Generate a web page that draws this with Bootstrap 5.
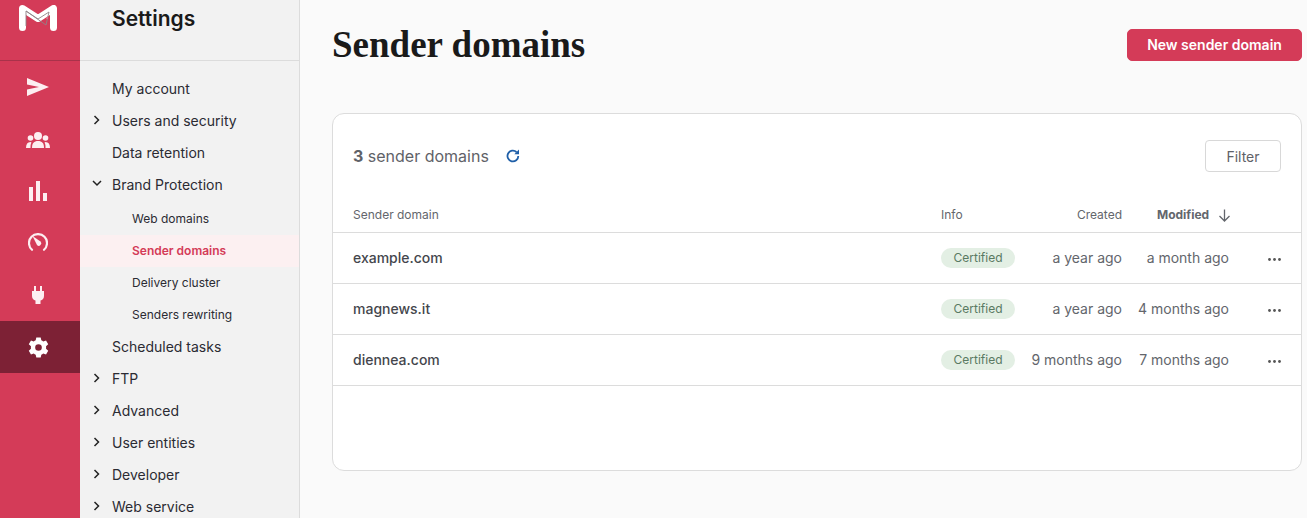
<!DOCTYPE html>
<html lang="en">
<head>
    <meta charset="UTF-8">
    <meta name="viewport" content="width=device-width, initial-scale=1.0">
    <title>Sender domains</title>
    <link href="https://cdn.jsdelivr.net/npm/bootstrap@5.3.2/dist/css/bootstrap.min.css" rel="stylesheet">
    <style>
        :root {
            --brand: #d43b58;
            --brand-dark: #7d2135;
            --line: #dcdcdc;
        }

        body {
            height: 518px;
            overflow: hidden;
            background: #fafafa;
            color: #212529;
            font-family: Inter, "Liberation Sans", sans-serif;
            font-size: 14px;
        }

        /* left icon rail */
        .app-rail {
            width: 80px;
            background: var(--brand);
        }

        .rail-logo {
            height: 61px;
            padding: 5px 4px 0 0;
            border-bottom: 1px solid #a8324a;
        }

        .rail-item {
            height: 52px;
            padding-right: 4px;
        }

        .rail-item.is-active {
            background: var(--brand-dark);
        }

        /* settings menu */
        .settings-menu {
            width: 220px;
            background: #f2f2f2;
            border-right: 1px solid var(--line);
        }

        .settings-head {
            height: 61px;
            padding: 6px 0 0 32px;
            border-bottom: 1px solid var(--line);
            font-size: 21px;
            font-weight: 600;
            line-height: 26px;
            color: #1a1a1a;
        }

        .settings-list {
            padding-top: 11px;
        }

        .menu-row {
            height: 32px;
            padding-left: 32px;
            color: #2b2b33;
            font-size: 14px;
            position: relative;
        }

        .menu-row svg {
            position: absolute;
            left: 12px;
            top: 11px;
        }

        .menu-subs {
            margin: 3px 0 -1px;
        }

        .menu-sub {
            padding-left: 52px;
            font-size: 12px;
        }

        .menu-sub.is-active {
            background: #fcf0f1;
            color: var(--brand);
            font-weight: 600;
        }

        /* main area */
        .main-area {
            padding: 0 5px 0 32px;
        }

        .page-head {
            height: 113px;
            padding-top: 22px;
        }

        .page-title {
            font-family: "Liberation Serif", serif;
            font-size: 37px;
            font-weight: 700;
            line-height: 46px;
            margin: 0;
            color: #1a1a1a;
        }

        .btn-brand {
            width: 175px;
            height: 32px;
            margin-top: 7px;
            padding: 0 0 2px;
            border-radius: 5px;
            background: var(--brand);
            border-color: var(--brand);
            color: #fff;
            font-size: 14px;
            font-weight: 600;
        }

        .domains-card {
            height: 358px;
            border-color: var(--line);
            border-radius: 12px;
            background: #fff;
        }

        .card-top {
            height: 85px;
            padding: 26px 20px 0;
        }

        .count-text {
            color: #5f6268;
            font-size: 16px;
            line-height: 32px;
        }

        .count-text b {
            font-weight: 700;
        }

        .refresh-icon {
            margin-left: 17px;
        }

        .btn-filter {
            width: 76px;
            height: 32px;
            padding: 0;
            border-radius: 4px;
            color: #5f6268;
            background: #fff;
            border-color: #d8d8d8;
            font-size: 14px;
        }

        .domains-table {
            table-layout: fixed;
            margin: 0;
            color: #4a4c52;
        }

        .domains-table th,
        .domains-table td {
            padding: 0 8px;
            vertical-align: middle;
            border-color: var(--line);
            background: transparent;
        }

        .domains-table th {
            height: 33px;
            font-size: 12px;
            font-weight: 400;
            color: #63666c;
        }

        .domains-table th.is-sorted {
            padding-right: 6px;
            font-weight: 700;
        }

        .sort-arrow {
            margin-left: 6px;
        }

        .domains-table td {
            height: 51px;
            font-size: 14px;
            color: #63666c;
        }

        .domains-table .cell-first {
            padding-left: 20px;
            font-weight: 450;
            color: #44464c;
        }

        .domains-table th.cell-first {
            font-weight: 400;
            color: #63666c;
        }

        .domains-table .cell-last {
            padding-right: 20px;
        }

        .cert-pill {
            width: 74px;
            padding: 0;
            height: 20px;
            line-height: 20px;
            vertical-align: 1px;
            background: #e3efe4;
            color: #5a7a62;
            font-size: 12px;
            font-weight: 400;
        }
    </style>
</head>
<body>
<div class="d-flex" id="app">
    <div class="app-rail flex-shrink-0">
        <div class="rail-logo d-flex justify-content-center align-items-start">
            <svg width="38" height="26" viewBox="0 0 38 26">
                <path d="M3.500 22.500 V3.500 L19 13.500 L34.500 3.500 V22.500" fill="none" stroke="#fff" stroke-width="7" stroke-linejoin="round" stroke-linecap="round"/>
                <path d="M7 21 V6 L19 14 L30 7 M7 6 L27 20 L30 7" fill="none" stroke="#8f8287" stroke-width=".9"/>
                <circle cx="28" cy="13" r="1" fill="#e8718a"/>
            </svg>
        </div>
        <div class="rail-item d-flex align-items-center justify-content-center">
            <svg width="22" height="18" viewBox="0 0 22 18"><path d="M0 0 L22 9 L0 18 V11.500 L12 9 L0 6.500 Z" fill="#fdeef1"/></svg>
        </div>
        <div class="rail-item d-flex align-items-center justify-content-center">
            <svg width="24" height="18" viewBox="0 -2 24 18" fill="#fdeef1">
                <circle cx="12" cy="4" r="4"/><circle cx="4.500" cy="6" r="2.800"/><circle cx="19.500" cy="6" r="2.800"/>
                <path d="M6 16 C6 11 8 9 12 9 C16 9 18 11 18 16 Z"/>
                <path d="M0 16 C0 12 1.500 10 4.500 10 L5.500 10.500 C4.500 12 4.500 14 4.500 16 Z"/>
                <path d="M24 16 C24 12 22.500 10 19.500 10 L18.500 10.500 C19.500 12 19.500 14 19.500 16 Z"/>
            </svg>
        </div>
        <div class="rail-item d-flex align-items-center justify-content-center">
            <svg width="18" height="20" viewBox="0 0 18 20" fill="#fdeef1"><rect x="0" y="6" width="4" height="14"/><rect x="7" y="0" width="4" height="20"/><rect x="14" y="12" width="4" height="8"/></svg>
        </div>
        <div class="rail-item d-flex align-items-center justify-content-center">
            <svg width="20" height="20" viewBox="0 1 20 20">
                <path d="M4 17.800 A9 9 0 1 1 16 17.800" fill="none" stroke="#fdeef1" stroke-width="2.200" stroke-linecap="round"/>
                <path d="M4.500 4 L12.500 9.500 A2.400 2.400 0 0 1 9 13 Z" fill="#fdeef1"/>
            </svg>
        </div>
        <div class="rail-item d-flex align-items-center justify-content-center">
            <svg width="12" height="18" viewBox="0 0 12 18" fill="#fdeef1"><path d="M2 0 H4 V5 H8 V0 H10 V5 H12 V10 C12 12.500 10.500 14 8.500 14.500 V18 H3.500 V14.500 C1.500 14 0 12.500 0 10 V5 H2 Z"/></svg>
        </div>
        <div class="rail-item is-active d-flex align-items-center justify-content-center">
            <svg width="21" height="21" viewBox="0 0 24 24"><path fill="#fff" fill-rule="evenodd" d="M14.500 0.500 L15.200 3.800 C16 4.100 16.700 4.500 17.400 5.100 L20.600 4 L23.100 8.300 L20.600 10.500 C20.700 11 20.700 11.500 20.700 12 C20.700 12.500 20.700 13 20.600 13.500 L23.100 15.700 L20.600 20 L17.400 18.900 C16.700 19.500 16 19.900 15.200 20.200 L14.500 23.500 H9.500 L8.800 20.200 C8 19.900 7.300 19.500 6.600 18.900 L3.400 20 L0.900 15.700 L3.400 13.500 C3.300 13 3.300 12.500 3.300 12 C3.300 11.500 3.300 11 3.400 10.500 L0.900 8.300 L3.400 4 L6.600 5.100 C7.300 4.500 8 4.100 8.800 3.800 L9.500 0.500 Z M12 8.200 A3.800 3.800 0 1 0 12 15.800 A3.800 3.800 0 1 0 12 8.200 Z"/></svg>
        </div>
    </div>

    <div class="settings-menu flex-shrink-0">
        <div class="settings-head">Settings</div>
        <div class="settings-list">
            <div class="menu-row d-flex align-items-center">My account</div>
            <div class="menu-row d-flex align-items-center"><svg width="9" height="10" viewBox="0 0 9 10"><path d="M2.500 1 L6.500 5 L2.500 9" fill="none" stroke="#222" stroke-width="1.500"/></svg>Users and security</div>
            <div class="menu-row d-flex align-items-center">Data retention</div>
            <div class="menu-row d-flex align-items-center"><svg width="10" height="9" viewBox="0 0 10 9"><path d="M1 2 L5 6 L9 2" fill="none" stroke="#222" stroke-width="1.500"/></svg>Brand Protection</div>
            <div class="menu-subs">
                <div class="menu-row menu-sub d-flex align-items-center">Web domains</div>
                <div class="menu-row menu-sub is-active d-flex align-items-center">Sender domains</div>
                <div class="menu-row menu-sub d-flex align-items-center">Delivery cluster</div>
                <div class="menu-row menu-sub d-flex align-items-center">Senders rewriting</div>
            </div>
            <div class="menu-row d-flex align-items-center">Scheduled tasks</div>
            <div class="menu-row d-flex align-items-center"><svg width="9" height="10" viewBox="0 0 9 10"><path d="M2.500 1 L6.500 5 L2.500 9" fill="none" stroke="#222" stroke-width="1.500"/></svg>FTP</div>
            <div class="menu-row d-flex align-items-center"><svg width="9" height="10" viewBox="0 0 9 10"><path d="M2.500 1 L6.500 5 L2.500 9" fill="none" stroke="#222" stroke-width="1.500"/></svg>Advanced</div>
            <div class="menu-row d-flex align-items-center"><svg width="9" height="10" viewBox="0 0 9 10"><path d="M2.500 1 L6.500 5 L2.500 9" fill="none" stroke="#222" stroke-width="1.500"/></svg>User entities</div>
            <div class="menu-row d-flex align-items-center"><svg width="9" height="10" viewBox="0 0 9 10"><path d="M2.500 1 L6.500 5 L2.500 9" fill="none" stroke="#222" stroke-width="1.500"/></svg>Developer</div>
            <div class="menu-row d-flex align-items-center"><svg width="9" height="10" viewBox="0 0 9 10"><path d="M2.500 1 L6.500 5 L2.500 9" fill="none" stroke="#222" stroke-width="1.500"/></svg>Web service</div>
        </div>
    </div>

    <div class="main-area flex-grow-1">
        <div class="page-head d-flex justify-content-between align-items-start">
            <h1 class="page-title">Sender domains</h1>
            <button type="button" class="btn btn-brand">New sender domain</button>
        </div>
        <div class="card domains-card">
            <div class="card-top d-flex justify-content-between align-items-start">
                <div class="count-text d-flex align-items-center">
                    <span><b>3</b> sender domains</span>
                    <svg class="refresh-icon" width="14" height="14" viewBox="0 0 14 14"><path d="M12.300 7 A5.400 5.400 0 1 1 10.500 3" fill="none" stroke="#1f5fa8" stroke-width="1.800"/><path d="M13 0.500 V5.200 H8.300 Z" fill="#1f5fa8"/></svg>
                </div>
                <button type="button" class="btn btn-filter">Filter</button>
            </div>
            <table class="table domains-table">
                <colgroup>
                    <col style="width:600px"><col style="width:90px"><col style="width:107px"><col style="width:107px"><col>
                </colgroup>
                <thead>
                    <tr>
                        <th class="cell-first">Sender domain</th>
                        <th>Info</th>
                        <th class="text-end">Created</th>
                        <th class="text-end is-sorted text-nowrap">Modified
                            <svg class="sort-arrow" width="13" height="13" viewBox="0 0 13 13"><path d="M6.500 0.500 V12 M1.500 7 L6.500 12 L11.500 7" fill="none" stroke="#63666c" stroke-width="1.300"/></svg>
                        </th>
                        <th></th>
                    </tr>
                </thead>
                <tbody>
                    <tr>
                        <td class="cell-first">example.com</td>
                        <td><span class="badge rounded-pill cert-pill">Certified</span></td>
                        <td class="text-end">a year ago</td>
                        <td class="text-end">a month ago</td>
                        <td class="cell-last text-end"><svg width="13" height="3" viewBox="0 0 13 3" fill="#555"><circle cx="1.500" cy="1.500" r="1.400"/><circle cx="6.500" cy="1.500" r="1.400"/><circle cx="11.500" cy="1.500" r="1.400"/></svg></td>
                    </tr>
                    <tr>
                        <td class="cell-first">magnews.it</td>
                        <td><span class="badge rounded-pill cert-pill">Certified</span></td>
                        <td class="text-end">a year ago</td>
                        <td class="text-end">4 months ago</td>
                        <td class="cell-last text-end"><svg width="13" height="3" viewBox="0 0 13 3" fill="#555"><circle cx="1.500" cy="1.500" r="1.400"/><circle cx="6.500" cy="1.500" r="1.400"/><circle cx="11.500" cy="1.500" r="1.400"/></svg></td>
                    </tr>
                    <tr>
                        <td class="cell-first">diennea.com</td>
                        <td><span class="badge rounded-pill cert-pill">Certified</span></td>
                        <td class="text-end">9 months ago</td>
                        <td class="text-end">7 months ago</td>
                        <td class="cell-last text-end"><svg width="13" height="3" viewBox="0 0 13 3" fill="#555"><circle cx="1.500" cy="1.500" r="1.400"/><circle cx="6.500" cy="1.500" r="1.400"/><circle cx="11.500" cy="1.500" r="1.400"/></svg></td>
                    </tr>
                </tbody>
            </table>
        </div>
    </div>
</div>
<script src="https://cdn.jsdelivr.net/npm/bootstrap@5.3.2/dist/js/bootstrap.bundle.min.js"></script>
</body>
</html>
